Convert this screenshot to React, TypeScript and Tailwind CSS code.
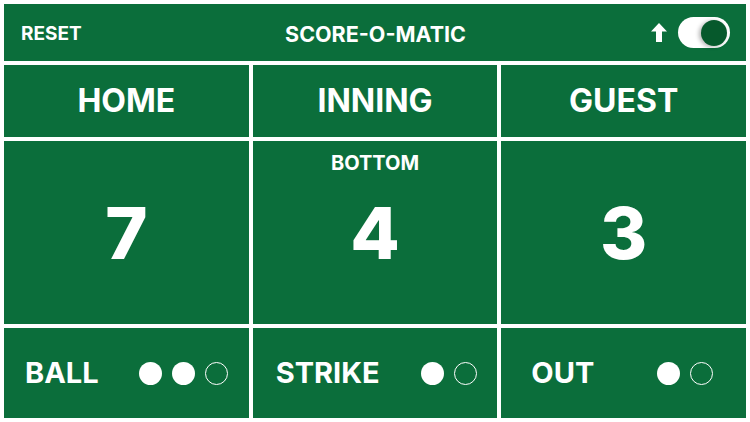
import React from "react";

const CELL = "bg-[#0b6e3b] text-white";

type Counter = {
  label: string;
  filled: number;
  total: number;
  pad: string;
};

const COUNTERS: Counter[] = [
  { label: "BALL", filled: 2, total: 3, pad: "pl-[21px] pr-[21px]" },
  { label: "STRIKE", filled: 1, total: 2, pad: "pl-[23px] pr-[20px]" },
  { label: "OUT", filled: 1, total: 2, pad: "pl-[30px] pr-[33px]" },
];

function Dots({ filled, total }: { filled: number; total: number }) {
  return (
    <div className="flex items-center gap-[10px]">
      {Array.from({ length: total }).map((_, i) =>
        i < filled ? (
          <span key={i} className="h-[23px] w-[23px] rounded-full bg-white" />
        ) : (
          <span
            key={i}
            className="h-[23px] w-[23px] rounded-full border-[1.5px] border-white"
          />
        ),
      )}
    </div>
  );
}

function Toggle() {
  return (
    <div className="flex h-[31px] w-[52px] items-center justify-end rounded-full bg-white p-[3px]">
      <span className="h-[26px] w-[26px] rounded-full bg-[#06592c] shadow-[-2px_1px_4px_rgba(0,0,0,0.3)]" />
    </div>
  );
}

export default function App() {
  return (
    <div
      className="flex h-[422px] w-[750px] flex-col gap-[4px] bg-white p-[4px]"
      style={{ fontFamily: "Inter, 'Liberation Sans', sans-serif" }}
    >
      {/* Top bar */}
      <div className={`${CELL} flex h-[57px] shrink-0 items-center pl-[17px] pr-[16px] pt-[3px]`}>
        <div className="flex-1 text-[19px] font-bold">RESET</div>
        <div className="text-[21.5px] font-bold">SCORE-O-MATIC</div>
        <div className="-mt-[3px] flex flex-1 items-center justify-end gap-[11px]">
          <svg width="16" height="19" viewBox="0 0 16 19" fill="white">
            <path d="M8 0 L16 8.5 L11 8.5 L11 19 L5 19 L5 8.5 L0 8.5 Z" />
          </svg>
          <Toggle />
        </div>
      </div>

      {/* Score grid */}
      <div className="grid flex-1 grid-cols-3 grid-rows-[72px_183px_90px] gap-[4px]">
        {["HOME", "INNING", "GUEST"].map((t) => (
          <div
            key={t}
            className={`${CELL} flex items-center justify-center text-[32px] font-bold`}
          >
            {t}
          </div>
        ))}

        <div className={`${CELL} flex items-center justify-center text-[72px] font-extrabold`}>
          7
        </div>
        <div className={`${CELL} flex flex-col items-center`}>
          <div className="h-[42px] pt-[11px] text-[20px] font-bold leading-[22px]">
            BOTTOM
          </div>
          <div className="flex flex-1 items-center text-[72px] font-extrabold">4</div>
          <div className="h-[42px]" />
        </div>
        <div className={`${CELL} flex items-center justify-center text-[72px] font-extrabold`}>
          3
        </div>

        {COUNTERS.map((c) => (
          <div
            key={c.label}
            className={`${CELL} ${c.pad} flex items-center justify-between`}
          >
            <span className="text-[29px] font-bold">{c.label}</span>
            <Dots filled={c.filled} total={c.total} />
          </div>
        ))}
      </div>
    </div>
  );
}
